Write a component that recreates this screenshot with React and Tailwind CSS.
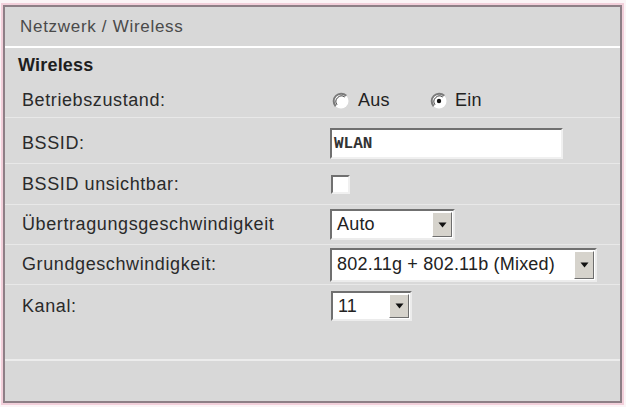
import React from "react";

const font = { fontFamily: '"Liberation Sans", Arial, sans-serif' };

function Radio({ checked }) {
  return (
    <svg width="18" height="18" viewBox="0 0 18 18" className="shrink-0">
      <circle cx="9" cy="9" r="7.5" fill="#ffffff" />
      <path d="M3.7 14.3 A7.5 7.5 0 0 1 14.3 3.7" fill="none" stroke="#7a7a7a" strokeWidth="2" />
      <path d="M5 12.8 A5.6 5.6 0 0 1 12.8 5" fill="none" stroke="#3c3c3c" strokeWidth="1" />
      {checked && <circle cx="9" cy="9" r="2.2" fill="#111111" />}
    </svg>
  );
}

function ArrowButton() {
  return (
    <div className="flex h-full w-[20px] shrink-0 items-center justify-center border border-t-white border-l-white border-b-[#6e6e6e] border-r-[#6e6e6e] bg-[#d6d3cc]">
      <svg width="9" height="6" viewBox="0 0 9 6">
        <path d="M0.5 0.5 L8.5 0.5 L4.5 5.5 Z" fill="#111111" />
      </svg>
    </div>
  );
}

function Select({ value, width, height }) {
  return (
    <div
      className={`flex items-stretch border-2 border-t-[#707070] border-l-[#707070] border-b-[#ececec] border-r-[#ececec] bg-white p-[1px] ${width} ${height}`}
    >
      <span className="flex flex-1 items-center pl-[4px] text-[18px] tracking-[0.2px] text-[#222]">{value}</span>
      <ArrowButton />
    </div>
  );
}

function Row({ label, children, className = "", line = true }) {
  return (
    <div className={`grid grid-cols-[325px_1fr] items-center ${line ? "border-b border-[#e8e8e8]" : ""} ${className}`}>
      <span className="pl-[17px] text-[18px] tracking-[0.6px] text-[#2a2a2a]">{label}</span>
      <div className="flex items-center">{children}</div>
    </div>
  );
}

export default function App() {
  return (
    <div className="h-[407px] w-[626px] overflow-hidden bg-[#fbf4f6] pt-[5px] pl-[3px] pr-[4px]" style={font}>
      <div className="flex h-[398px] flex-col border-2 border-[#8d7f86] bg-[#d9d9d9] shadow-[0_0_0_2px_#f2cfda]">
        <div className="flex h-[41px] items-center border-b-2 border-white bg-[#d8d8d8] pl-[15px] text-[17px] tracking-[0.7px] text-[#4a4a4a]">
          Netzwerk / Wireless
        </div>

        <div className="flex h-[34px] items-center pl-[13px] text-[18px] font-bold tracking-[0.2px] text-[#1e1e1e]">
          Wireless
        </div>

        <Row label="Betriebszustand:" className="h-[36px] pt-[2px]">
          <div className="flex items-center pl-[2px]">
            <Radio />
            <span className="ml-[8px] text-[18px] tracking-[0.3px] text-[#222]">Aus</span>
            <span className="ml-[40px]"><Radio checked /></span>
            <span className="ml-[7px] text-[18px] tracking-[0.3px] text-[#222]">Ein</span>
          </div>
        </Row>

        <Row label="BSSID:" className="h-[46px] pt-[6px]">
          <div className="flex h-[31px] w-[233px] items-center border-2 border-t-[#707070] border-l-[#707070] border-b-[#f0f0f0] border-r-[#f0f0f0] bg-white pl-[2px]">
            <span className="text-[16px] font-bold text-[#333]" style={{ fontFamily: '"Liberation Mono", "Courier New", monospace' }}>
              WLAN
            </span>
          </div>
        </Row>

        <Row label="BSSID unsichtbar:" className="h-[41px]">
          <div className="ml-[1px] h-[19px] w-[19px] border-2 border-t-[#707070] border-l-[#707070] border-b-[#f0f0f0] border-r-[#f0f0f0] bg-white" />
        </Row>

        <Row label="Übertragungsgeschwindigkeit" className="h-[40px]">
          <Select value="Auto" width="w-[125px]" height="h-[31px]" />
        </Row>

        <Row label="Grundgeschwindigkeit:" className="h-[40px]">
          <Select value="802.11g + 802.11b (Mixed)" width="w-[267px]" height="h-[34px]" />
        </Row>

        <Row label="Kanal:" className="h-[40px] pt-[2px]" line={false}>
          <div className="ml-[1px]">
            <Select value="11" width="w-[81px]" height="h-[30px]" />
          </div>
        </Row>

        <div className="h-[34px]" />
        <div className="flex-1 border-t-2 border-[#ececec] bg-[#d8d8d8]" />
      </div>
    </div>
  );
}
